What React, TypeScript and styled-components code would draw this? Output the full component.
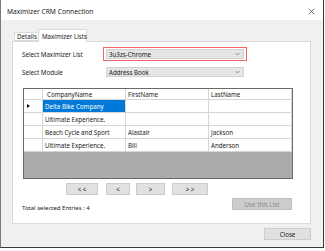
import React from "react";
import styled, { createGlobalStyle } from "styled-components";

const Global = createGlobalStyle`
  html, body { margin: 0; padding: 0; background: #ffffff; }
  body { font-family: "Noto Sans", "Open Sans", sans-serif; font-size: 6.2px; color: #1a1a1a; }
  * { box-sizing: border-box; }
`;

const Window = styled.div`
  width: 324px;
  height: 248px;
  display: flex;
  flex-direction: column;
  border-left: 1px solid #7a7a7a;
  border-right: 1px solid #3a3a3a;
  border-bottom: 1px solid #3a3a3a;
  background: #f0f0f0;
`;

const TitleBar = styled.div`
  height: 20px;
  background: #ffffff;
  display: flex;
  align-items: center;
  justify-content: space-between;
  padding: 3px 7px 0 6px;
  font-size: 6.7px;
  color: #1a1a1a;
`;

const CloseX = styled.svg`
  width: 7px;
  height: 7px;
  margin-right: 1px;
`;

const Body = styled.div`
  flex: 1;
  display: flex;
  flex-direction: column;
  padding: 9px 12px 0 11px;
`;

const TabStrip = styled.div`
  height: 12px;
  display: flex;
  align-items: flex-end;
  padding-left: 2px;
  position: relative;
  z-index: 1;
`;

const Tab = styled.div<{ $active?: boolean }>`
  height: ${(p) => (p.$active ? 13 : 9)}px;
  margin-bottom: ${(p) => (p.$active ? -1 : 0)}px;
  width: ${(p) => (p.$active ? 49 : 24)}px;
  padding-left: ${(p) => (p.$active ? 3 : 2)}px;
  background: #ffffff;
  border: 1px solid #d9d9d9;
  border-bottom: ${(p) => (p.$active ? "none" : "1px solid #d9d9d9")};
  border-right: ${(p) => (p.$active ? "1px solid #d9d9d9" : "none")};
  display: flex;
  align-items: center;
  font-size: 6.2px;
  white-space: nowrap;
`;

const Panel = styled.div`
  width: 299px;
  height: 183px;
  background: #ffffff;
  border: 1px solid #d9d9d9;
  display: flex;
  flex-direction: column;
  padding: 5px 0 0 9px;
`;

const FieldRow = styled.div<{ $mt?: number }>`
  display: flex;
  align-items: center;
  margin-top: ${(p) => p.$mt ?? 0}px;
`;

const Label = styled.div`
  width: 81px;
  font-size: 6.2px;
`;

const Highlight = styled.div<{ $on?: boolean }>`
  width: 144px;
  height: 14px;
  border: 1px solid ${(p) => (p.$on ? "#ee6666" : "transparent")};
  padding: 1px 2px;
  display: flex;
`;

const Dropdown = styled.div`
  flex: 1;
  background: #e5e5e5;
  border: 1px solid #d2d2d2;
  display: flex;
  align-items: center;
  justify-content: space-between;
  padding: 0 3px 0 2px;
  font-size: 6.2px;
`;

const Chevron = styled.svg`
  width: 5px;
  height: 4px;
`;

const Grid = styled.div`
  width: 270px;
  height: 91px;
  margin: 9px 0 0 1px;
  border: 1px solid #6a6a6a;
  background: #ababab;
  display: grid;
  grid-template-columns: 19px 83px 83px 1fr;
  grid-auto-rows: 13px;
  grid-template-rows: 11px;
  align-content: start;
`;

const Cell = styled.div<{ $sel?: boolean; $head?: boolean }>`
  background: ${(p) => (p.$sel ? "#0078d7" : "#ffffff")};
  color: ${(p) => (p.$sel ? "#ffffff" : "#1a1a1a")};
  border-right: 1px solid #d6d6d6;
  border-bottom: 1px solid #d6d6d6;
  display: flex;
  align-items: center;
  padding-left: ${(p) => (p.$head ? 4 : 2)}px;
  font-size: 6.2px;
  white-space: nowrap;
  overflow: hidden;
`;

const RowHead = styled.div`
  background: #ffffff;
  border-right: 1px solid #d6d6d6;
  border-bottom: 1px solid #d6d6d6;
  display: flex;
  align-items: center;
  padding-left: 3px;
`;

const Arrow = styled.div`
  width: 0;
  height: 0;
  border-top: 2px solid transparent;
  border-bottom: 2px solid transparent;
  border-left: 3px solid #111;
`;

const NavRow = styled.div`
  display: flex;
  margin: 4px 0 0 44px;
  gap: 7px;
`;

const Button = styled.div<{ $w: number; $ml?: number; $disabled?: boolean }>`
  width: ${(p) => p.$w}px;
  height: 12px;
  margin-left: ${(p) => p.$ml ?? 0}px;
  background: ${(p) => (p.$disabled ? "#cccccc" : "#e1e1e1")};
  border: 1px solid ${(p) => (p.$disabled ? "#bfbfbf" : "#cdcdcd")};
  color: ${(p) => (p.$disabled ? "#8a8a8a" : "#1a1a1a")};
  display: flex;
  align-items: center;
  justify-content: center;
  font-size: 6.2px;
  white-space: pre;
`;

const FooterRow = styled.div`
  display: flex;
  align-items: flex-start;
  justify-content: space-between;
  width: 270px;
  margin: 3px 0 0 0;
`;

const Total = styled.div`
  margin-top: 6px;
  font-size: 6px;
`;

const BottomBar = styled.div`
  display: flex;
  justify-content: flex-end;
  padding-top: 4px;
`;

const rows = [
  { c: "Delta Bike Company", f: "", l: "", sel: true },
  { c: "Ultimate Experience.", f: "", l: "" },
  { c: "Beach Cycle and Sport", f: "Alastair", l: "Jackson" },
  { c: "Ultimate Experience.", f: "Bill", l: "Anderson" },
];

export default function App() {
  return (
    <>
      <Global />
      <Window>
        <TitleBar>
          <span>Maximizer CRM Connection</span>
          <CloseX viewBox="0 0 10 10">
            <path d="M1 1 L9 9 M9 1 L1 9" stroke="#333" strokeWidth="1" />
          </CloseX>
        </TitleBar>
        <Body>
          <TabStrip>
            <Tab>Details</Tab>
            <Tab $active>Maximizer Lists</Tab>
          </TabStrip>
          <Panel>
            <FieldRow>
              <Label>Select Maximizer List</Label>
              <Highlight $on>
                <Dropdown>
                  <span>3u3zs-Chrome</span>
                  <Chevron viewBox="0 0 10 6">
                    <path d="M1 1 L5 5 L9 1" stroke="#555" fill="none" strokeWidth="1.2" />
                  </Chevron>
                </Dropdown>
              </Highlight>
            </FieldRow>
            <FieldRow $mt={4}>
              <Label>Select Module</Label>
              <Highlight>
                <Dropdown>
                  <span>Address Book</span>
                  <Chevron viewBox="0 0 10 6">
                    <path d="M1 1 L5 5 L9 1" stroke="#555" fill="none" strokeWidth="1.2" />
                  </Chevron>
                </Dropdown>
              </Highlight>
            </FieldRow>
            <Grid>
              <RowHead />
              <Cell $head>CompanyName</Cell>
              <Cell>FirstName</Cell>
              <Cell>LastName</Cell>
              {rows.map((r, i) => (
                <React.Fragment key={i}>
                  <RowHead>{r.sel ? <Arrow /> : null}</RowHead>
                  <Cell $sel={r.sel}>{r.c}</Cell>
                  <Cell>{r.f}</Cell>
                  <Cell>{r.l}</Cell>
                </React.Fragment>
              ))}
            </Grid>
            <NavRow>
              <Button $w={32}>{"< <"}</Button>
              <Button $w={24} $ml={1}>&lt;</Button>
              <Button $w={29} $ml={-1}>&gt;</Button>
              <Button $w={36}>{"> >"}</Button>
            </NavRow>
            <FooterRow>
              <Total>Total selected Entries : 4</Total>
              <Button $w={60} $disabled>Use this List</Button>
            </FooterRow>
          </Panel>
          <BottomBar>
            <Button $w={47}>Close</Button>
          </BottomBar>
        </Body>
      </Window>
    </>
  );
}
